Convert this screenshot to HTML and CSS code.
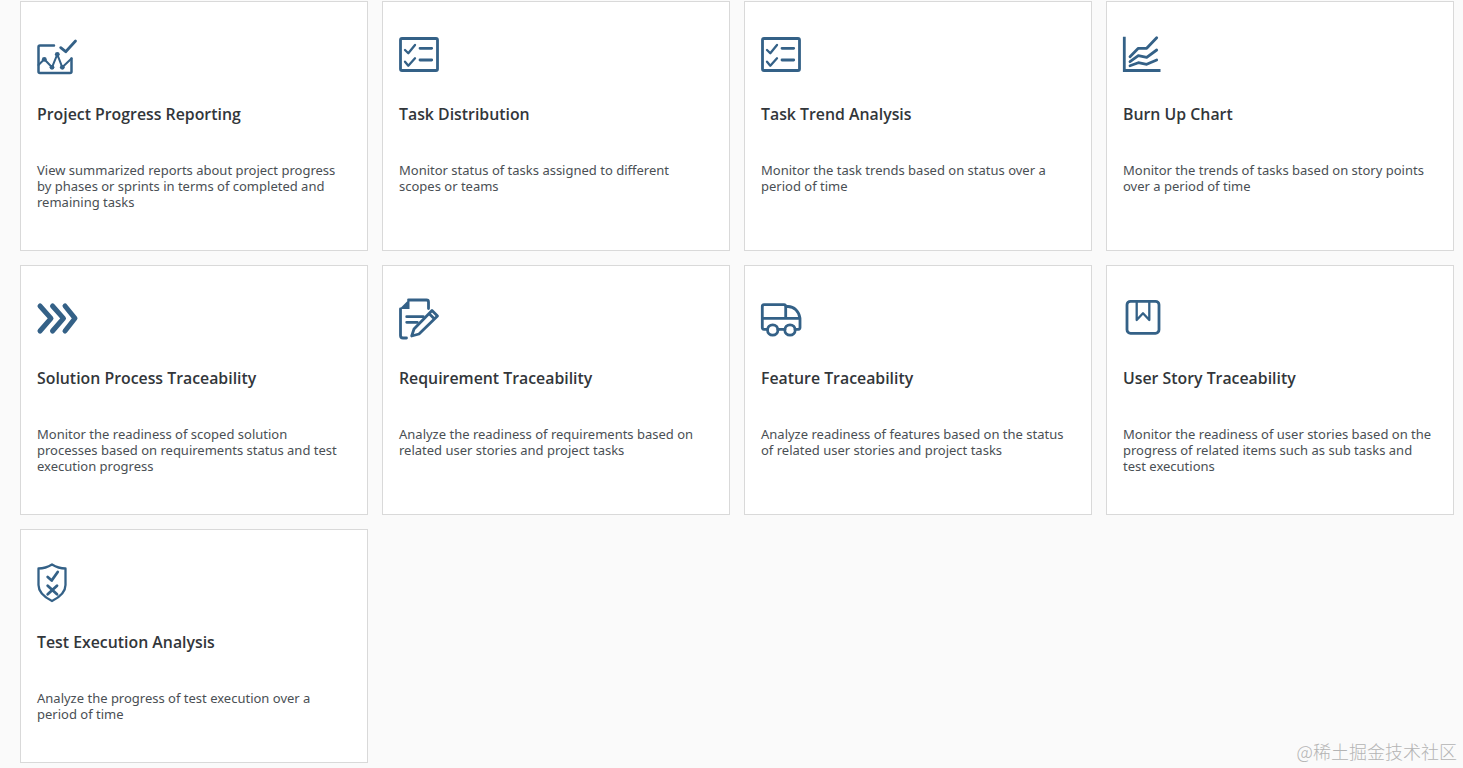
FILE: index.html
```html
<!DOCTYPE html>
<html lang="en">
<head>
<meta charset="utf-8">
<title>Reports</title>
<link rel="stylesheet" href="styles.css">
</head>
<body>
<main class="grid">
  <article class="card">
    <svg class="icon" viewBox="0 0 42 42"><path d="M17 9.500H3A1.500 1.500 0 0 0 1.500 11V35.500A1.500 1.500 0 0 0 3 37h30A1.500 1.500 0 0 0 34.500 35.500V22.500"/><path d="M1.500 29l5.800-5.700 7.700 8 5.300-13 5 13 9.200-8.800" class="thin"/><circle cx="7.300" cy="23.300" r="2.400" class="dot"/><circle cx="15" cy="31.300" r="2.400" class="dot"/><circle cx="20.300" cy="18.300" r="2.400" class="dot"/><circle cx="25.300" cy="31.300" r="2.400" class="dot"/><path d="M23.700 11.700l5 4L38.500 5" class="wide"/></svg>
    <h2 class="title">Project Progress Reporting</h2>
    <p class="desc">View summarized reports about project progress by phases or sprints in terms of completed and remaining tasks</p>
  </article>
  <article class="card">
    <svg class="icon" viewBox="0 0 42 42"><rect x="1.500" y="2.500" width="37" height="32" rx="1.500" class="wide"/><path d="M6 14l3.300 3.300L16 9M6 25.700l3.300 4L16 22.300" class="mid"/><path d="M21 12.300h11.700M21 24h11.700" class="wide"/></svg>
    <h2 class="title">Task Distribution</h2>
    <p class="desc">Monitor status of tasks assigned to different scopes or teams</p>
  </article>
  <article class="card">
    <svg class="icon" viewBox="0 0 42 42"><rect x="1.500" y="2.500" width="37" height="32" rx="1.500" class="wide"/><path d="M6 14l3.300 3.300L16 9M6 25.700l3.300 4L16 22.300" class="mid"/><path d="M21 12.300h11.700M21 24h11.700" class="wide"/></svg>
    <h2 class="title">Task Trend Analysis</h2>
    <p class="desc">Monitor the task trends based on status over a period of time</p>
  </article>
  <article class="card">
    <svg class="icon" viewBox="0 0 42 42"><path d="M1.300 0.700V34.500H37.500" class="square"/><path d="M7 20.700l8.300-8.400h8.400L33.700 1.700M7 25.700l8.300-6 8.400 1.600L33.700 14M7 29.700l8.300-3 8.400 1.600 10-4.300" class="wide"/></svg>
    <h2 class="title">Burn Up Chart</h2>
    <p class="desc">Monitor the trends of tasks based on story points over a period of time</p>
  </article>
  <article class="card">
    <svg class="icon" viewBox="0 0 42 42"><path d="M3 6l11 12.300L3 31M15.500 6l11 12.300L15.500 31M28 6l10 12.300L28 31" class="heavy"/></svg>
    <h2 class="title">Solution Process Traceability</h2>
    <p class="desc">Monitor the readiness of scoped solution processes based on requirements status and test execution progress</p>
  </article>
  <article class="card">
    <svg class="icon" viewBox="0 0 42 42"><path d="M9.500 0H27.500A2 2 0 0 1 29.500 2V8.500M1.500 9V35.500A2.500 2.500 0 0 0 4 38H7.500" class="wide"/><path d="M0.500 9L10.500 -1V9Z" class="solid"/><path d="M7.700 16.700H24.300M7.700 22.300H18.300" class="wide"/><path d="M12.700 36L15 29 33 10.500 38.500 16 20 34ZM30 13.500l5.500 5.500" class="wide"/></svg>
    <h2 class="title">Requirement Traceability</h2>
    <p class="desc">Analyze the readiness of requirements based on related user stories and project tasks</p>
  </article>
  <article class="card">
    <svg class="icon" viewBox="0 0 42 42"><path d="M6.500 29.300H3A1.800 1.800 0 0 1 1.300 27.500V6.500A1.800 1.800 0 0 1 3 4.700H23A1.800 1.800 0 0 1 24.700 6.500V18.300M1.300 18.300H39V27.500A1.800 1.800 0 0 1 37.300 29.300H34M16.800 29.300H24M24.700 6.500H27C33 6.500 38 11 39 18.300" class="wide"/><circle cx="11.700" cy="30" r="5.200" class="wide"/><circle cx="29" cy="30" r="5.200" class="wide"/></svg>
    <h2 class="title">Feature Traceability</h2>
    <p class="desc">Analyze readiness of features based on the status of related user stories and project tasks</p>
  </article>
  <article class="card">
    <svg class="icon" viewBox="0 0 42 42"><rect x="4" y="1.300" width="32" height="32" rx="3.500" class="wide"/><path d="M13.700 2V20L20 13.300 26.300 20V2" class="mid"/></svg>
    <h2 class="title">User Story Traceability</h2>
    <p class="desc">Monitor the readiness of user stories based on the progress of related items such as sub tasks and test executions</p>
  </article>
  <article class="card short">
    <svg class="icon" viewBox="0 0 42 42"><path d="M1.500 4.500C6.500 4.500 11 3 15 0.500 19 3 23.500 4.500 28.500 4.500V21C28.500 28 23 33 15 37 7 33 1.500 28 1.500 21Z" class="mid"/><path d="M10.700 13l4 3.500 6-8.500M10.700 21.700l9.300 8.600M20 21.700l-9.300 8.600" class="wide"/></svg>
    <h2 class="title">Test Execution Analysis</h2>
    <p class="desc">Analyze the progress of test execution over a period of time</p>
  </article>
</main>
<div class="mark">@稀土掘金技术社区</div>
</body>
</html>
```

FILE: styles.css
```css
html, body {
  margin: 0;
  height: 100%;
  overflow: hidden;
}
body {
  background: #fafafa;
  font-family: "Noto Sans", "Open Sans", sans-serif;
  color: #32363a;
}
.grid {
  display: grid;
  grid-template-columns: repeat(4, 348px);
  grid-template-rows: 250px 250px 234px;
  gap: 14px;
  padding: 1px 0 0 20px;
}
.card {
  box-sizing: border-box;
  background: #fff;
  border: 1px solid #d9d9d9;
  padding: 34px 16px 0;
}
.icon {
  display: block;
  width: 42px;
  height: 42px;
  overflow: visible;
  fill: none;
  stroke: #346187;
  stroke-width: 2.500;
  stroke-linecap: round;
  stroke-linejoin: round;
}
.icon .thin { stroke-width: 2; }
.icon .mid { stroke-width: 2.300; }
.icon .wide { stroke-width: 2.800; }
.icon .heavy { stroke-width: 5; }
.icon .square { stroke-width: 2.800; stroke-linecap: butt; stroke-linejoin: miter; }
.icon .dot, .icon .solid { fill: #346187; stroke: none; }
.title {
  margin: 26px 0 0;
  font-family: "Open Sans", "Noto Sans", sans-serif;
  font-size: 15.850px;
  line-height: 20px;
  font-weight: 600;
  color: #32363a;
}
.desc {
  margin: 38px 0 0;
  font-size: 13px;
  line-height: 16px;
  color: #4a4f54;
}
.mark {
  position: absolute;
  right: 6px;
  bottom: 5px;
  font-family: "Noto Sans CJK SC", sans-serif;
  font-size: 18px;
  font-weight: 300;
  line-height: 24px;
  color: #b4b4b4;
}
```
